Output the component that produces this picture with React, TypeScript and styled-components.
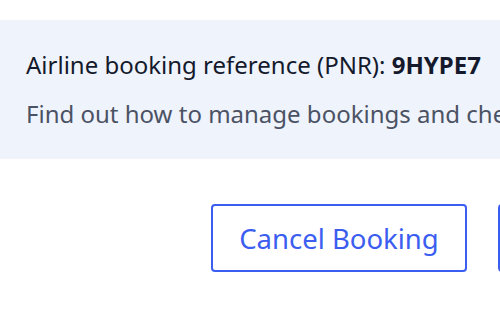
import React from 'react';
import styled, { createGlobalStyle } from 'styled-components';

const GlobalStyle = createGlobalStyle`
  html, body {
    margin: 0;
    padding: 0;
    background: #ffffff;
    overflow: hidden;
  }
  body {
    font-family: "Noto Sans", "Open Sans", sans-serif;
  }
`;

const Page = styled.div`
  width: 793px;
  padding-top: 20px;
`;

const InfoPanel = styled.section`
  background: #eff3fc;
  height: 139px;
  box-sizing: border-box;
  padding: 29px 26px 0;
`;

const InfoLine = styled.p<{ $muted?: boolean }>`
  margin: 0 0 ${p => (p.$muted ? 0 : 17)}px;
  font-size: 24px;
  line-height: 32px;
  white-space: nowrap;
  color: ${p => (p.$muted ? '#4b5264' : '#141a2c')};
`;

const Pnr = styled.strong`
  font-weight: 700;
`;

const Actions = styled.div`
  display: flex;
  justify-content: flex-end;
  gap: 31px;
  padding: 45px 26px 0;
`;

const OutlineButton = styled.button`
  box-sizing: border-box;
  height: 68px;
  padding: 0 26px;
  border: 2px solid #3b5ef0;
  border-radius: 4px;
  background: #ffffff;
  color: #3b5ef0;
  font-family: "Noto Sans", "Open Sans", sans-serif;
  font-size: 27.5px;
  cursor: pointer;
`;

export default function App() {
  return (
    <>
      <GlobalStyle />
      <Page>
        <InfoPanel>
          <InfoLine>
            Airline booking reference (PNR): <Pnr>9HYPE7</Pnr>
          </InfoLine>
          <InfoLine $muted>
            Find out how to manage bookings and check in with the airline
          </InfoLine>
        </InfoPanel>
        <Actions>
          <OutlineButton>Cancel Booking</OutlineButton>
          <OutlineButton>Change Booking</OutlineButton>
        </Actions>
      </Page>
    </>
  );
}
